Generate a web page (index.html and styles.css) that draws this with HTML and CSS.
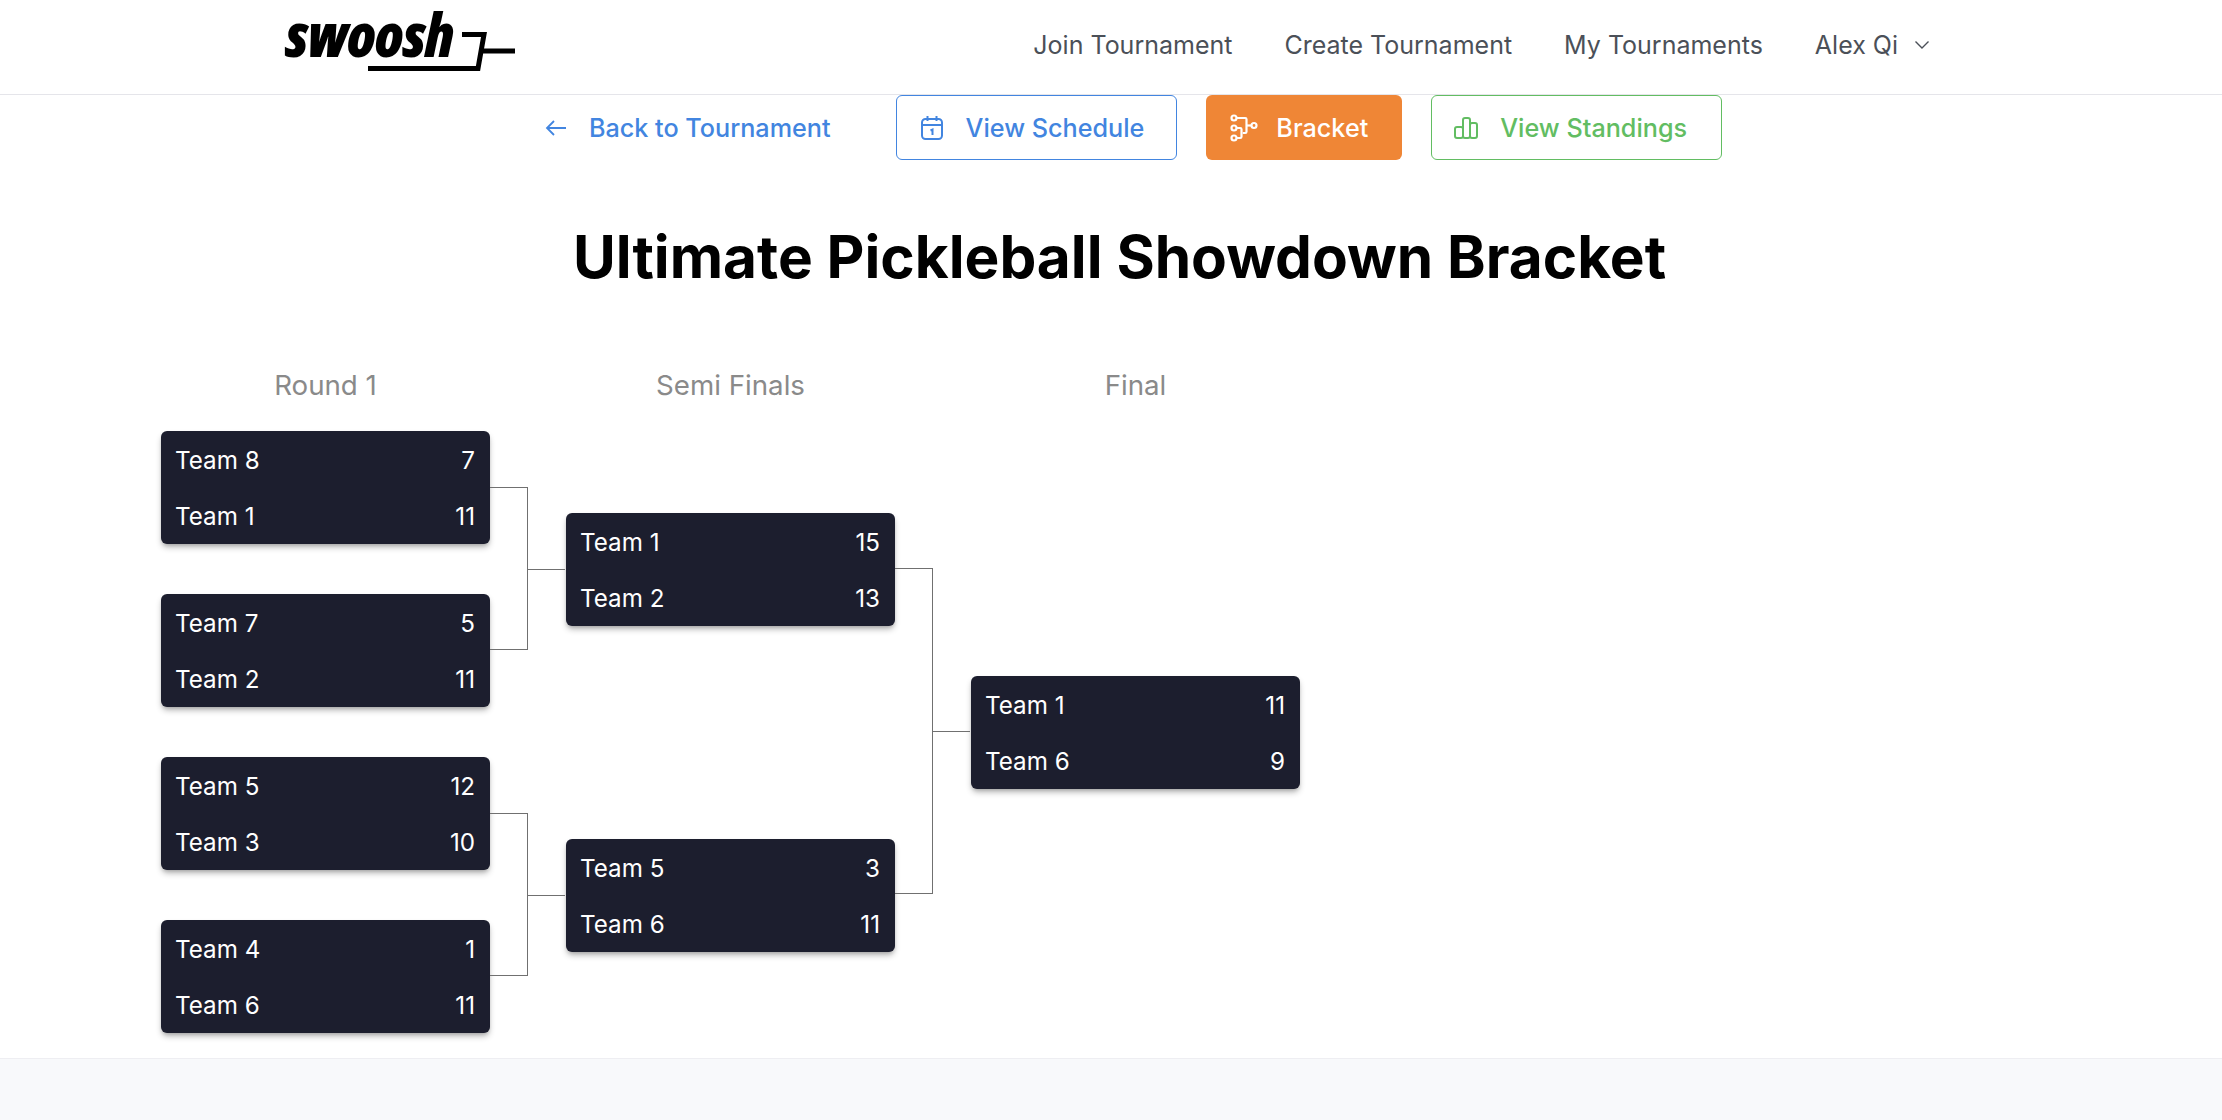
FILE: index.html
```html
<!DOCTYPE html>
<html lang="en">

<head>
  <meta charset="UTF-8" />
  <meta name="viewport" content="width=device-width, initial-scale=1.0" />
  <title>Ultimate Pickleball Showdown Bracket</title>

  <link rel="stylesheet" href="styles.css">
</head>

<body>
  <header class="topbar">
    <a class="logo">
      <span class="logo-text">swoosh</span>
      <svg class="logo-mark" width="152" height="44" viewBox="0 0 152 44">
        <path d="M3 38.5 H113 L119 4.5 H97 M117 21 H150" fill="none" stroke="#000" stroke-width="5" />
      </svg>
    </a>
    <nav class="nav">
      <a>Join Tournament</a>
      <a>Create Tournament</a>
      <a>My Tournaments</a>
      <a class="user">Alex Qi
        <svg width="16" height="10" viewBox="0 0 16 10">
          <path d="M1.5 1.5 L8 8 L14.5 1.5" fill="none" stroke="#4b5058" stroke-width="1.4" />
        </svg>
      </a>
    </nav>
  </header>

  <main class="content">
    <div class="actions">
      <a class="btn btn-back">
        <svg width="24" height="24" viewBox="0 0 24 24" fill="none" stroke="currentColor" stroke-width="1.8">
          <path d="M22 12 H3 M10 5 L3 12 L10 19" />
        </svg>
        Back to Tournament
      </a>
      <a class="btn btn-schedule">
        <svg width="26" height="28" viewBox="0 0 26 28" fill="none" stroke="currentColor" stroke-width="2">
          <rect x="3" y="5" width="20" height="20" rx="3.5" />
          <path d="M3 11 H23 M8.5 2 V7 M17.5 2 V7 M11.5 16.5 L13.5 15.5 V21" />
        </svg>
        View Schedule
      </a>
      <a class="btn btn-bracket">
        <svg width="30" height="30" viewBox="0 0 24 24" fill="none" stroke="currentColor" stroke-width="1.75">
          <circle cx="4" cy="4" r="2" />
          <circle cx="20" cy="10" r="2" />
          <circle cx="4" cy="12" r="2" />
          <circle cx="4" cy="20" r="2" />
          <path d="M6 12h3a1 1 0 0 1 1 1v6a1 1 0 0 1 -1 1h-3" />
          <path d="M6 4h7a1 1 0 0 1 1 1v10a1 1 0 0 1 -1 1h-2" />
          <path d="M14 10h4" />
        </svg>
        Bracket
      </a>
      <a class="btn btn-standings">
        <svg width="26" height="24" viewBox="0 0 26 24" fill="none" stroke="currentColor" stroke-width="2">
          <rect x="2" y="11" width="8" height="11" rx="2" />
          <rect x="10" y="2" width="7" height="20" rx="2" />
          <rect x="17" y="7" width="7" height="15" rx="2" />
        </svg>
        View Standings
      </a>
    </div>

    <h1 class="title">Ultimate Pickleball Showdown Bracket</h1>

    <div class="bracket">
      <section class="round">
        <h2>Round 1</h2>
        <div class="matches matches-first">
          <div class="match">
            <div class="row"><span>Team 8</span><span>7</span></div>
            <div class="row"><span>Team 1</span><span>11</span></div>
          </div>
          <div class="match">
            <div class="row"><span>Team 7</span><span>5</span></div>
            <div class="row"><span>Team 2</span><span>11</span></div>
          </div>
          <div class="match">
            <div class="row"><span>Team 5</span><span>12</span></div>
            <div class="row"><span>Team 3</span><span>10</span></div>
          </div>
          <div class="match">
            <div class="row"><span>Team 4</span><span>1</span></div>
            <div class="row"><span>Team 6</span><span>11</span></div>
          </div>
        </div>
      </section>

      <div class="links links-first">
        <div class="link"></div>
        <div class="link"></div>
      </div>

      <section class="round">
        <h2>Semi Finals</h2>
        <div class="matches matches-semi">
          <div class="match">
            <div class="row"><span>Team 1</span><span>15</span></div>
            <div class="row"><span>Team 2</span><span>13</span></div>
          </div>
          <div class="match">
            <div class="row"><span>Team 5</span><span>3</span></div>
            <div class="row"><span>Team 6</span><span>11</span></div>
          </div>
        </div>
      </section>

      <div class="links links-semi">
        <div class="link link-tall"></div>
      </div>

      <section class="round">
        <h2>Final</h2>
        <div class="matches matches-final">
          <div class="match">
            <div class="row"><span>Team 1</span><span>11</span></div>
            <div class="row"><span>Team 6</span><span>9</span></div>
          </div>
        </div>
      </section>
    </div>
  </main>

  <footer class="footer"></footer>
</body>

</html>
```

FILE: styles.css
```css
* {
  box-sizing: border-box;
}

html,
body {
  height: 100%;
}

body {
  margin: 0;
  display: flex;
  flex-direction: column;
  background-color: #fff;
  font-family: Inter, "Liberation Sans", sans-serif;
  overflow: hidden;
}

/* header */
.topbar {
  height: 95px;
  flex: none;
  display: flex;
  align-items: flex-start;
  justify-content: space-between;
  padding: 0 292px 0 285px;
  border-bottom: 1px solid #e5e5ea;
}

.logo {
  position: relative;
  display: block;
  height: 94px;
  width: 232px;
}

.logo-text {
  display: block;
  margin-top: 2px;
  font-family: "Open Sans", sans-serif;
  font-style: italic;
  font-weight: 800;
  font-stretch: 75%;
  font-size: 60px;
  line-height: 64px;
  letter-spacing: -1px;
  color: #000;
}

.logo-mark {
  position: absolute;
  left: 80px;
  top: 30px;
}

.nav {
  display: flex;
  align-items: center;
  gap: 52px;
  height: 90px;
  font-size: 25px;
  color: #4b5058;
}

.user {
  display: flex;
  align-items: center;
  gap: 16px;
}

/* buttons */
.content {
  flex: 1;
}

.actions {
  display: flex;
  justify-content: center;
  align-items: center;
  gap: 29px;
  padding-left: 43px;
}

.btn {
  display: flex;
  align-items: center;
  gap: 21px;
  height: 65px;
  padding: 0 33px 0 22px;
  border: 1px solid transparent;
  border-radius: 6px;
  font-size: 25.2px;
  font-weight: 500;
  white-space: nowrap;
}

.btn-back {
  color: #4285e0;
  padding-left: 0;
  padding-right: 35px;
}

.btn-schedule {
  color: #4285e0;
  border-color: #4285e0;
  padding-right: 32px;
}

.btn-bracket {
  color: #fff;
  background-color: #ef8636;
  gap: 17px;
}

.btn-standings {
  color: #62bd62;
  border-color: #62bd62;
  padding: 0 34px 0 21px;
}

.title {
  margin: 59px 0 0;
  padding-left: 17px;
  text-align: center;
  font-size: 58.5px;
  line-height: 76px;
  font-weight: 700;
  color: #000;
}

/* bracket */
.bracket {
  display: flex;
  padding: 73px 0 0 161px;
}

.round {
  width: 329px;
}

.round h2 {
  margin: 0 0 28px;
  height: 35px;
  line-height: 35px;
  text-align: center;
  font-size: 27.7px;
  font-weight: 400;
  color: #8a8a8a;
}

.matches {
  display: flex;
  flex-direction: column;
}

.matches-first {
  gap: 50px;
}

.matches-semi {
  padding-top: 82px;
  gap: 213px;
}

.matches-final {
  padding-top: 245px;
}

.match {
  height: 113px;
  padding: 12px 15px 9px 14px;
  border-radius: 6px;
  background-color: #1c1e2e;
  color: #fff;
  font-size: 24.2px;
  display: flex;
  flex-direction: column;
  justify-content: space-between;
  box-shadow: 0 4px 6px -1px rgba(0, 0, 0, .3), 0 2px 4px -2px rgba(0, 0, 0, .2);
}

.row {
  display: flex;
  justify-content: space-between;
  line-height: 36px;
}

/* lines between rounds */
.links {
  width: 76px;
  display: flex;
  flex-direction: column;
  padding-top: 119px;
}

.links-first {
  gap: 163px;
}

.links-semi {
  padding-top: 200px;
}

.link {
  position: relative;
  width: 38px;
  height: 163px;
  border: 1px solid #707070;
  border-left: 0;
}

.link::after {
  content: "";
  position: absolute;
  left: 100%;
  top: 50%;
  width: 38px;
  height: 1px;
  background-color: #707070;
}

.link-tall {
  height: 326px;
}

.footer {
  height: 62px;
  flex: none;
  background-color: #f8f9fb;
  border-top: 1px solid #eeeef2;
}
```
